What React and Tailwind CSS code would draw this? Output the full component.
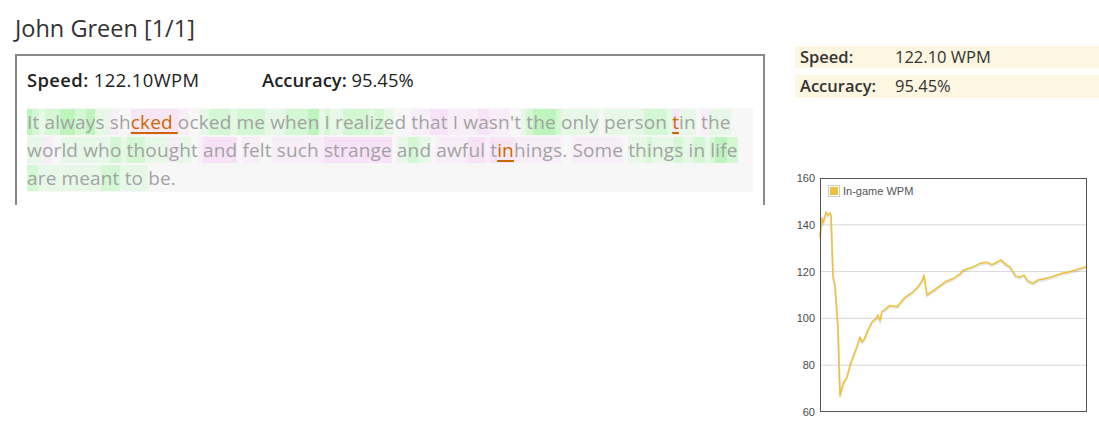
const CLS = {
  G: "bg-[#bdf5bd]",
  g: "bg-[#d4f7d4]",
  l: "bg-[#e8f8e8]",
  p: "bg-[#f7e2f7]",
  q: "bg-[#f7eef7]",
  ".": "",
  o: "bg-[#f7e6f4] text-[#cc6600] underline underline-offset-[3px] decoration-[2px]",
};

const lines = [
  [
    ["It always sh", "GglggGgGllq"],
    ["cked ", "ooooo"],
    ["ocked me when I realized ", "q.lgglggllggGlgllggglgl."],
    ["that I wasn't ", "qqppqqqqpqq..l"],
    ["the only person ", "gGGgllll.llllggl"],
    ["t", "o"],
    ["in the", "ll.qll"],
  ],
  [
    ["world ", "lq.lll"],
    ["who ", "llgl"],
    ["thought ", "ggllql.q"],
    ["and ", "ppp."],
    ["felt ", "qq..q"],
    ["such ", "qqqqq"],
    ["strange ", "ppppppp."],
    ["and ", "lgl."],
    ["awful ", "qqqppq"],
    ["t", "p"],
    ["in", "oo"],
    ["hings. ", "qqqqq.."],
    ["Some ", "qqqq."],
    ["things ", "llgllgl"],
    ["in ", "lgl"],
    ["life", "gGGg"],
  ],
  [["are meant to be.", "gllllllggllll..."]],
];

function renderLine(segs) {
  const out = [];
  segs.forEach(([text, codes], si) => {
    let i = 0;
    while (i < text.length) {
      const c = codes[i] || ".";
      let j = i;
      while (j < text.length && (codes[j] || ".") === c) j++;
      out.push(
        <span key={si + "-" + i} className={CLS[c]}>
          {text.slice(i, j)}
        </span>
      );
      i = j;
    }
  });
  return out;
}

const pts = [
  [0, 135], [2, 143], [3, 141], [4, 142], [6, 145.5], [8, 144], [10, 145], [11, 144],
  [13, 118], [15, 114], [18, 96], [20, 67], [23, 72], [27, 75], [30, 80], [33, 83.5],
  [37, 88], [40, 92], [42, 90], [44, 91], [48, 95], [52, 98.5], [56, 100], [58, 101.5],
  [60, 99], [62, 103], [64, 103.5], [70, 105.5], [77, 105], [85, 109], [92, 111],
  [98, 113.5], [102, 116], [104, 118.5], [107, 110], [110, 111], [114, 112], [117, 113],
  [125, 115.5], [133, 117], [140, 119], [143, 120.6], [153, 122], [160, 123.5], [167, 124],
  [172, 123], [177, 124], [181, 125], [186, 123], [190, 122], [193, 120], [196, 118],
  [200, 117.7], [204, 118.5], [208, 116], [213, 115], [218, 116.4], [225, 117], [232, 117.8],
  [240, 119], [250, 120], [258, 121], [265, 122], [267, 122],
];

function WpmChart() {
  const ox = 25;
  const oy = 10;
  const w = 267;
  const h = 234;
  const toY = (v) => oy + ((160 - v) / 100) * h;
  const line = pts.map(([x, v]) => `${ox + x},${toY(v).toFixed(1)}`).join(" ");
  const shadow = pts.map(([x, v]) => `${ox + x},${(toY(v) + 1.5).toFixed(1)}`).join(" ");
  const ticks = [160, 140, 120, 100, 80, 60];
  return (
    <svg width="304" height="252" className="block">
      {ticks.slice(1, -1).map((t) => (
        <line key={t} x1={ox} x2={ox + w} y1={toY(t)} y2={toY(t)} stroke="#d8d8d8" strokeWidth="1" />
      ))}
      {ticks.map((t) => (
        <text
          key={t}
          x={ox - 5}
          y={toY(t) + 4}
          textAnchor="end"
          fontSize="11"
          fontFamily="'Liberation Sans', Arial, sans-serif"
          fill="#4a4a4a"
        >
          {t}
        </text>
      ))}
      <polyline points={shadow} fill="none" stroke="rgba(0,0,0,0.1)" strokeWidth="2" />
      <polyline points={line} fill="none" stroke="#edc240" strokeWidth="1.6" strokeLinejoin="round" />
      <rect x={ox + 0.5} y={oy + 0.5} width={w - 1} height={h - 1} fill="none" stroke="#545454" strokeWidth="1" />
      <rect x={ox + 8.5} y={oy + 7.5} width="11" height="11" fill="#fff" stroke="#cccccc" strokeWidth="1" />
      <rect x={ox + 10} y={oy + 9} width="8" height="8" fill="#edc240" />
      <text x={ox + 23} y={oy + 17} fontSize="11" fontFamily="'Liberation Sans', Arial, sans-serif" fill="#545454">
        In-game WPM
      </text>
    </svg>
  );
}

export default function App() {
  return (
    <div className="flex bg-white px-[15px] min-h-[423px] text-[#333] font-['Open_Sans',sans-serif]">
      <div className="w-[750px] shrink-0">
        <h1 className="pt-[12px] mb-[10px] text-[23.5px] leading-[32px] font-normal">John Green [1/1]</h1>
        <div className="border-2 border-b-0 border-[#888] px-[10px] pt-[10px] pb-[13px]">
          <div className="flex text-[18.4px] leading-[28px] text-[#222] mb-[14px]">
            <div className="w-[235px] tracking-[0.4px]">
              <span className="font-semibold">Speed:</span> 122.10WPM
            </div>
            <div>
              <span className="font-semibold">Accuracy:</span> 95.45%
            </div>
          </div>
          <div className="bg-[#f7f7f7] text-[#a3a3a3] text-[19px] tracking-[0.15px] leading-[28px] whitespace-pre">
            {lines.map((segs, i) => (
              <div key={i}>{renderLine(segs)}</div>
            ))}
          </div>
        </div>
      </div>
      <div className="ml-[30px] flex-1 -mr-[15px]">
        <div className="mt-[46px] flex flex-col gap-[7px] text-[16.5px] text-[#333]">
          <div className="flex bg-[#fdf6e1] h-[22px] items-center pl-[5px]">
            <span className="w-[95px] font-semibold">Speed:</span>
            <span>122.10 WPM</span>
          </div>
          <div className="flex bg-[#fdf6e1] h-[23px] items-center pl-[5px]">
            <span className="w-[95px] font-semibold">Accuracy:</span>
            <span>95.45%</span>
          </div>
        </div>
        <div className="mt-[70px]">
          <WpmChart />
        </div>
      </div>
    </div>
  );
}
